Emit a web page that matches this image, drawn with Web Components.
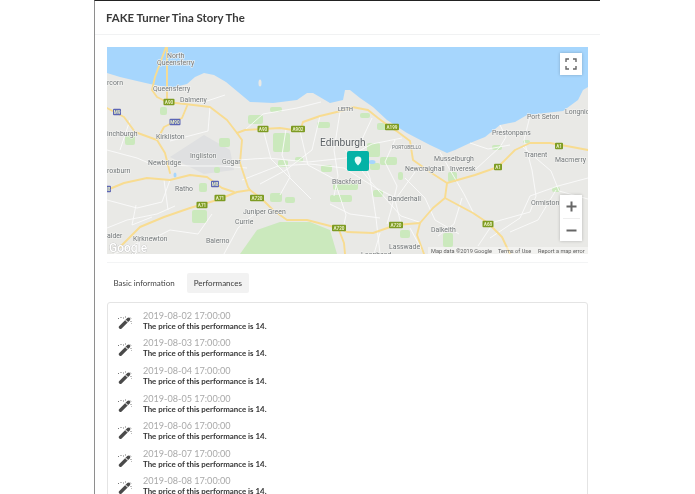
<!DOCTYPE html>
<html>
<head>
<meta charset="utf-8">
<title>FAKE Turner Tina Story The</title>
<style>
  html, body { margin: 0; height: 100%; overflow: hidden; background: #fff; }
  body { font-family: Lato, "Liberation Sans", sans-serif; color: #333; }
</style>
</head>
<body>
<show-page heading="FAKE Turner Tina Story The">
  <show-map></show-map>
  <show-tabs></show-tabs>
  <perf-list></perf-list>
</show-page>

<script>
class ShowPage extends HTMLElement {
    constructor() {
        super();
        let shadowRoot = this.attachShadow({mode: 'open'});
        shadowRoot.innerHTML = `
            <style>
                :host {display: block; width: 506px; height: 494px; margin-left: 94px; box-sizing: border-box;
                    border-left: 1px solid #8e8e8e; border-top: 1px solid #222; overflow: hidden;}
                h1 {margin: 0; height: 33px; padding: 0 12px 0 11px; display: flex; align-items: center;
                    font-size: 11.4px; font-weight: 700; color: #3a3a3a; border-bottom: 1px solid #f1f2f3;}
                h1 span {filter: blur(.25px);}
                .body {padding: 12px 12px 0 12px;}
            </style>
            <h1><span>${this.getAttribute('heading')}</span></h1>
            <div class="body"><slot></slot></div>
        `;
    }
}
customElements.define('show-page', ShowPage);

// 地图数据: [文字, x, 基线y]
const places = [
    ['North', 167, 58], ['Queensferry', 157, 65], ['rcorn', 107, 85], ['Queensferry', 153, 91], ['Dalmeny', 180, 102],
    ['inchburgh', 107, 136], ['Kirkliston', 156, 139], ['Ingliston', 190, 158], ['Newbridge', 148, 165], ['Gogar', 222, 164],
    ['roxburn', 107, 173], ['Ratho', 175, 191], ['Juniper Green', 243, 214], ['Currie', 235, 224], ['alder', 107, 238],
    ['Kirknewton', 133, 241], ['Balerno', 206, 243], ['Blackford', 332, 184], ['Port Seton', 527, 119], ['Longnic', 565, 114],
    ['Prestonpans', 492, 135], ['Musselburgh', 434, 161], ['Newcraighall', 405, 171], ['Inveresk', 450, 171],
    ['Tranent', 524, 157], ['Macmerry', 555, 162], ['Danderhall', 388, 201], ['Ormiston', 531, 205], ['Dalkeith', 431, 232],
    ['Lasswade', 389, 249], ['Loanhead', 361, 257]
];
const shields = [
    [169, 102, 'A90', 0], [117, 112, 'M9', 1], [175, 122, 'M90', 1], [263, 129, 'A90', 0], [298, 129, 'A902', 0],
    [392, 127, 'A199', 0], [215, 184, 'M8', 1], [107, 189, 'M8', 1], [202, 205, 'A71', 0], [220, 198, 'A71', 0],
    [257, 198, 'A720', 0], [339, 228, 'A720', 0], [396, 225, 'A720', 0], [488, 224, 'A68', 0], [498, 167, 'A1', 0], [559, 146, 'A1', 0]
];
// 绿地 [x1, y1, x2, y2]
const greens = [
    [248, 115, 263, 124], [270, 107, 282, 112], [317, 122, 330, 128], [273, 133, 290, 152], [278, 160, 288, 167], [295, 157, 303, 162],
    [270, 193, 282, 202], [285, 197, 295, 203], [333, 183, 358, 190], [330, 195, 352, 202], [367, 143, 380, 157], [370, 163, 380, 170],
    [380, 157, 397, 165], [373, 190, 383, 197], [398, 172, 403, 180], [360, 113, 370, 118], [377, 123, 387, 130], [448, 172, 457, 182],
    [400, 230, 410, 238], [443, 233, 453, 247], [160, 107, 167, 115], [219, 138, 230, 147], [199, 183, 207, 192], [192, 210, 207, 223],
    [125, 135, 135, 145], [214, 167, 220, 173], [552, 187, 560, 192], [492, 145, 502, 150], [523, 140, 530, 143], [321, 165, 332, 172]
];

class ShowMap extends HTMLElement {
    constructor() {
        super();
        let shadowRoot = this.attachShadow({mode: 'open'});
        let road = 'fill="none" stroke="#f8dc91" stroke-linejoin="round" stroke-linecap="round"';
        shadowRoot.innerHTML = `
            <style>
                :host {display: block; position: relative; width: 481px; height: 207px; overflow: hidden;
                    padding-bottom: 8px; border-bottom: 1px solid #f3f4f5;}
                svg {display: block; width: 481px; height: 207px;}
                text {font-family: Roboto, "Liberation Sans", sans-serif; font-size: 6.9px; fill: #727779;
                    stroke: #f4f4f2; stroke-width: 1.2px; paint-order: stroke;}
                .shield {font-size: 4.6px; font-weight: 700; fill: #e9efc4; stroke: none; text-anchor: middle;}
                .small {font-size: 5.6px; stroke: none; fill: #5e5e5e;}
                .ctl {position: absolute; right: 6px; width: 22px; background: #fff;
                    box-shadow: 0 0 3px rgba(0,0,0,.22); display: flex; flex-direction: column; align-items: center;}
                .full {top: 6px; height: 22px; justify-content: center;}
                .zoom {top: 148px; height: 46px;}
                .zoom div {height: 23px; width: 100%; display: flex; align-items: center; justify-content: center; box-sizing: border-box;}
                .zoom div + div {border-top: 1px solid #eee; width: 17px;}
                .pin {position: absolute; left: 240px; top: 104px; width: 22px; height: 20px; border-radius: 2px;
                    background: #03b2a6; display: flex; align-items: center; justify-content: center;}
            </style>
            <svg viewBox="107 47 481 207" aria-label="Map of Edinburgh">
                <defs>
                    <filter id="soft" x="0" y="0" width="100%" height="100%"><feGaussianBlur stdDeviation="0.55"/></filter>
                    <filter id="softer" x="0" y="0" width="100%" height="100%"><feGaussianBlur stdDeviation="0.35"/></filter>
                </defs>
                <g filter="url(#soft)">
                    <rect x="107" y="47" width="481" height="207" fill="#e9e9e6"/>
                    <path d="M170 157l34-22 26 15 4 20-30 4z" fill="#dfe0e1"/>
                    <path d="M240 254l17-24 23-8h30l20 8 7 24z" fill="#cbe9bd"/>
                    <path d="M107 47H588V87L583 90L578 100L563 111L545 113L527 115L515 122L500 125L485 137L470 143L455 150L447 153L430 145L407 133L387 120L373 107L360 98L350 90L345 90L343 100L330 103L313 93L307 93L297 100L273 103L250 102L238 92L226 82L214 75L204 73L195 77L187 84L175 87L160 86L150 84L137 81L120 77L107 73Z" fill="#a6d6fd"/>
                    <ellipse cx="260" cy="83" rx="1.500" ry="3.500" fill="#e9e9e6"/>
                    ${greens.map(g => `<rect x="${g[0]}" y="${g[1]}" width="${g[2] - g[0]}" height="${g[3] - g[1]}" rx="2" fill="#cbe9bd"/>`).join('')}
                    <ellipse cx="372" cy="162" rx="3.500" ry="2" fill="#a6d6fd"/>
                    <ellipse cx="175" cy="175" rx="1.500" ry="2.500" fill="#a6d6fd"/>
                    <g fill="none" stroke="#fbfbfb" stroke-width=".9">
                        <path d="M107 150l30 8 14 6 40 2 31 0 25 2M130 120l-10 30M107 200l30 8 25-6 8-22M136 205l-4 20 20-8M164 180l4 30M201 103l24-8M210 107l-2 24-38 10"/>
                        <path d="M245 130l18-16 34-6 24-6M263 129l8 30 20 20 20 20M286 129l-4 26 8 22-10 18M300 131l8 34 26 14 12 36 -3 14M320 116l-8 34-26 20-26 14"/>
                        <path d="M238 160l30-2 40 4 38-4 26-14 30-6M242 180l36-14 32-2 34 4 32 20 24 12M340 112l-6 38 4 26-4 20M372 118l-14 30 12 30 6 40 4 36"/>
                        <path d="M395 140l-10 22 12 24-6 24-4 14M345 150l26 32 30 34 18 6M415 172l-20 28 6 24M330 204l20 10 30 4M380 233l-6 21M410 228l14 26"/>
                        <path d="M500 125l6 12-6 10-24 22M470 143l18 6 22-4M530 116l-6 24 8 30 4 26-6 16-36 10-16 24M523 147l28 24 8 20 29 8M588 178l-30 8-28 10-10 22-30 20M556 190l-18 30-28 12"/>
                        <path d="M440 152l10 18 14 24 10 20M405 178l20 20 10 22 24 14M462 198l-8 26-16 12M107 228l20-8 30-6 18-8M150 240l20-10 28 4 14-20M224 254l14-26 16-14M114 254l26-12"/>
                    </g>
                    <g ${road} stroke-width="1.900">
                        <path d="M166 47L155 77L152 90L157 97L167 102L185 104L210 107L227 120L237 133L245 130L263 129L280 128L300 131L303 122L320 116L345 110L352 107L368 110L378 118L390 127L398 132L410 141L413 160L430 172L447 183L475 175L498 167L515 150L530 143L550 143L572 147L588 150"/>
                        <path d="M167 47L167 90L167 102M187 106L182 118L164 127L157 140L165 153L170 173"/>
                        <path d="M107 108L124 117L135 132L157 140"/>
                        <path d="M107 190L124 183L147 178L170 180L190 175L207 177L222 188L234 192"/>
                        <path d="M120 247L127 240L140 227L164 217L190 208L217 200L237 192L250 190L263 200L273 210L287 220L307 220L338 228L347 232L373 233L396 225L420 223L433 208L445 198L447 183"/>
                        <path d="M237 133L242 140L240 163L248 187L250 190"/>
                        <path d="M445 198L473 213L488 223L502 237L510 254M420 223L417 235L424 254M339 230L344 243L345 254"/>
                    </g>
                </g>
                <g filter="url(#softer)">
                    ${places.map(p => `<text x="${p[1]}" y="${p[2]}">${p[0]}</text>`).join('')}
                    <text x="338" y="111" style="font-size:5.500px;font-weight:500">LEITH</text>
                    <text x="392" y="149" style="font-size:4.800px">PORTOBELLO</text>
                    <text x="320" y="146" style="font-size:10.200px;fill:#5a5f63">Edinburgh</text>
                    ${shields.map(s => {
                        let w = s[2].length > 3 ? 14 : s[2].length > 2 ? 11 : 8;
                        return `<rect x="${s[0] - w / 2}" y="${s[1] - 3.200}" width="${w}" height="6.400" rx="1" fill="${s[3] ? '#5c66b5' : '#7d9b22'}"/>
                        <text class="shield" x="${s[0]}" y="${s[1] + 1.600}">${s[2]}</text>`;
                    }).join('')}
                    <text x="109" y="252" style="font-size:12px;font-weight:500;fill:#fff;stroke:#b5b5b5;stroke-width:.6px">Google</text>
                    <rect x="428" y="247" width="160" height="7" fill="#fff" opacity=".4"/>
                    <text class="small" x="431" y="253">Map data ©2019 Google</text>
                    <text class="small" x="498" y="253">Terms of Use</text>
                    <text class="small" x="538" y="253">Report a map error</text>
                </g>
            </svg>
            <div class="ctl full">
                <svg style="width:12px;height:12px" viewBox="0 0 12 12"><path d="M1 4V1h3M8 1h3v3M11 8v3H8M4 11H1V8" fill="none" stroke="#666" stroke-width="1.400"/></svg>
            </div>
            <div class="ctl zoom">
                <div><svg style="width:11px;height:11px" viewBox="0 0 11 11"><path d="M5.500 .5v10M.5 5.500h10" stroke="#666" stroke-width="2"/></svg></div>
                <div><svg style="width:11px;height:11px" viewBox="0 0 11 11"><path d="M.5 5.500h10" stroke="#666" stroke-width="2"/></svg></div>
            </div>
            <div class="pin">
                <svg style="width:8px;height:10px" viewBox="0 0 8 10"><path d="M4 .5a3.400 3.400 0 0 1 3.400 3.400C7.400 6 5 8.500 4 9.500 3 8.500.6 6 .6 3.900A3.400 3.400 0 0 1 4 .5z" fill="#e6fbf8"/></svg>
            </div>
        `;
    }
}
customElements.define('show-map', ShowMap);

class ShowTabs extends HTMLElement {
    constructor() {
        super();
        let shadowRoot = this.attachShadow({mode: 'open'});
        shadowRoot.innerHTML = `
            <style>
                :host {display: flex; gap: 6px; margin-top: 10px; height: 20px; font-size: 8px; color: #444;}
                span {display: flex; align-items: center; padding: 0 6.500px; border-radius: 2px; filter: blur(.25px);}
                .on {background: #f2f2f2; color: #3a3a3a;}
            </style>
            <span>Basic information</span>
            <span class="on">Performances</span>
        `;
    }
}
customElements.define('show-tabs', ShowTabs);

class PerfRow extends HTMLElement {
    constructor() {
        super();
        let shadowRoot = this.attachShadow({mode: 'open'});
        shadowRoot.innerHTML = `
            <style>
                :host {display: grid; grid-template-columns: 35px 1fr; height: 27.6px; align-items: center; box-sizing: border-box;}
                svg {width: 16px; height: 14px; display: block; margin-left: 9px; filter: blur(.35px);}
                .text {margin-top: -2px; filter: blur(.25px);}
                .date {font-size: 9.100px; line-height: 11px; color: #a9a9a9;}
                .price {font-size: 7.900px; line-height: 11px; font-weight: 700; color: #333;}
            </style>
            <svg viewBox="0 0 16 14">
                <path d="M3.500 12.300L11.500 4.300" stroke="#4a4a4a" stroke-width="3.400" stroke-linecap="round"/>
                <path d="M9.300 6.500L10 5.800" stroke="#ddd" stroke-width="3.400"/>
                <path d="M1 3.500h1M3.500 2.500h1M6 3h1M8 2h1M13 2.500l1 1M13.500 6.500h1M14.500 8.500h.5" stroke="#777" stroke-width="1"/>
            </svg>
            <div class="text">
                <div class="date"><slot name="date"></slot></div>
                <div class="price"><slot></slot></div>
            </div>
        `;
    }
}
customElements.define('perf-row', PerfRow);

class PerfList extends HTMLElement {
    constructor() {
        super();
        let shadowRoot = this.attachShadow({mode: 'open'});
        shadowRoot.innerHTML = `
            <style>
                :host {display: block; margin-top: 9px; padding: 5px 0 8px 0; border: 1px solid #e4e4e4; border-radius: 3px;}
            </style>
            <slot></slot>
        `;
        let dates = ['02', '03', '04', '05', '06', '07', '08'];
        dates.forEach(d => {
            let row = document.createElement('perf-row');
            row.innerHTML = `<span slot="date">2019-08-${d} 17:00:00</span>The price of this performance is 14.`;
            this.appendChild(row);
        });
    }
}
customElements.define('perf-list', PerfList);
</script>
</body>
</html>
